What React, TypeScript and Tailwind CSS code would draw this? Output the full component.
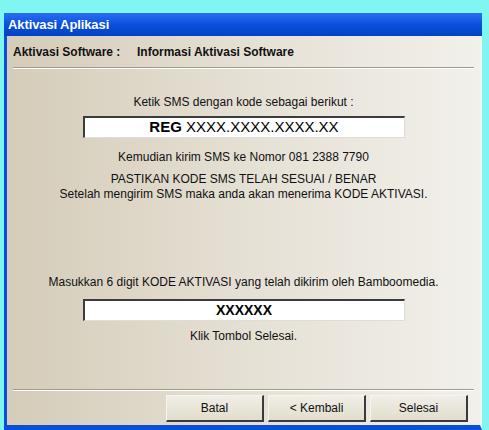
const font = { fontFamily: '"Liberation Sans", Arial, sans-serif' };

function Field({ children }: { children: React.ReactNode }) {
  return (
    <div className="mx-auto flex h-[22px] w-[322px] items-center justify-center border-t-2 border-l-2 border-t-[#3c3c3c] border-l-[#3c3c3c] border-r border-b border-r-[#e0ddd4] border-b-[#e0ddd4] bg-white text-black">
      {children}
    </div>
  );
}

function Btn({ label }: { label: string }) {
  return (
    <button className="flex h-[27px] w-[98px] items-center justify-center border-t border-l border-t-[#f6f4ee] border-l-[#f6f4ee] border-r-2 border-b-2 border-r-[#3a3a3a] border-b-[#3a3a3a] bg-gradient-to-b from-[#f0eee6] to-[#e2ddcd] text-[12px] text-[#111]">
      {label}
    </button>
  );
}

export default function App() {
  return (
    <div className="h-[430px] w-[489px] overflow-hidden bg-[#80f6f2] pt-[13px] pl-[4px]" style={font}>
      <div className="flex h-[417px] w-[478px] flex-col">
        {/* title bar */}
        <div className="flex h-[23px] items-center bg-gradient-to-b from-[#2a6ff0] via-[#0a50dc] to-[#0442c4] pl-[4px]">
          <span className="text-[13px] font-bold text-white tracking-[-0.1px]">Aktivasi Aplikasi</span>
        </div>

        <div className="flex flex-1 border-l-[3px] border-b-[5px] border-r-[2px] border-l-[#0a4fd6] border-b-[#0a4fd6] border-r-[#f4f3ef]">
          <div className="flex flex-1 flex-col bg-gradient-to-r from-[#d5ccb9] via-[#e5e0d4] to-[#f2f0eb] text-[12px] text-[#111]">
            {/* header */}
            <div className="flex h-[31px] items-center pl-[6px] font-bold">
              <span className="w-[124px]">Aktivasi Software :</span>
              <span>Informasi Aktivasi Software</span>
            </div>
            <div className="mx-[6px] h-[2px] border-t border-b border-t-[#a19c90] border-b-white" />

            {/* body */}
            <div className="flex flex-1 flex-col text-center">
              <div className="mt-[25px] leading-[16px]">Ketik SMS dengan kode sebagai berikut :</div>
              <div className="mt-[6px]">
                <Field>
                  <span className="text-[15px]">
                    <b>REG</b> XXXX.XXXX.XXXX.XX
                  </span>
                </Field>
              </div>
              <div className="mt-[11px] leading-[16px]">Kemudian kirim SMS ke Nomor 081 2388 7790</div>
              <div className="mt-[7px] leading-[15px]">PASTIKAN KODE SMS TELAH SESUAI / BENAR</div>
              <div className="leading-[15px]">Setelah mengirim SMS maka anda akan menerima KODE AKTIVASI.</div>

              <div className="mt-[72px] leading-[16px]">Masukkan 6 digit KODE AKTIVASI yang telah dikirim oleh Bamboomedia.</div>
              <div className="mt-[9px]">
                <Field>
                  <span className="text-[14px] font-bold">XXXXXX</span>
                </Field>
              </div>
              <div className="mt-[7px] leading-[16px]">Klik Tombol Selesai.</div>
            </div>

            <div className="mx-[6px] h-[2px] border-t border-b border-t-[#a19c90] border-b-white" />
            <div className="flex h-[34px] items-start justify-end gap-[4px] pt-[4px] pr-[12px]">
              <Btn label="Batal" />
              <Btn label="< Kembali" />
              <Btn label="Selesai" />
            </div>
          </div>
        </div>
      </div>
    </div>
  );
}
